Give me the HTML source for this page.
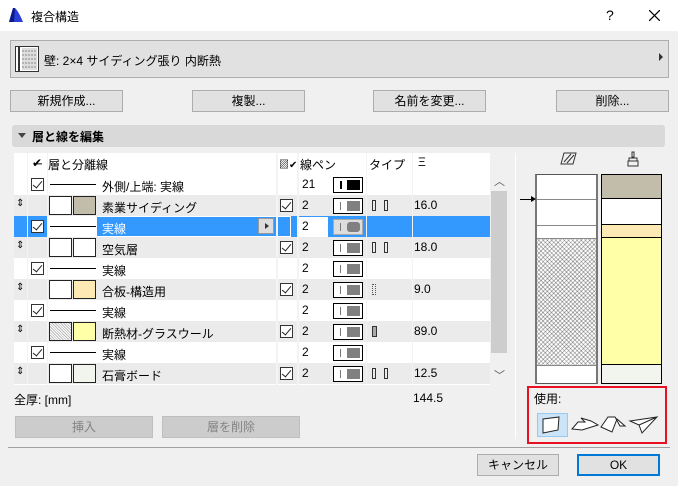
<!DOCTYPE html>
<html><head><meta charset="utf-8"><style>
*{margin:0;padding:0;box-sizing:border-box}
body{width:678px;height:486px;background:#f0f0f0;font-family:"Liberation Sans","Noto Sans CJK JP",sans-serif;font-size:12px;color:#000;position:relative;overflow:hidden}
.a{position:absolute}
.btn{position:absolute;background:#e1e1e1;border:1px solid #adadad;text-align:center;line-height:20px;font-size:12px}
.row{position:absolute;left:14px;width:476px;height:21px}
.g{background:#ebebeb}
.cb{position:absolute;width:13px;height:13px;border:1px solid #333;background:#fff}
.cb:after{content:"";position:absolute;left:3px;top:0px;width:4px;height:8px;border:solid #222;border-width:0 1.5px 1.5px 0;transform:rotate(40deg)}
.sw{position:absolute;top:1px;width:23px;height:19px;border:1px solid #222;background:#fff}
.ln{position:absolute;top:10px;left:36px;width:46px;height:1px;background:#000}
.tx{position:absolute;left:88px;top:4px}
.pen{position:absolute;left:288px;top:3px}
.lb{position:absolute;left:319px;top:3px;width:30px;height:16px;border:1px solid #000;background:#fff}
.lb i{position:absolute;left:6px;top:3px;width:1px;height:8px;background:#777}
.lb b{position:absolute;left:13px;top:2px;width:13px;height:10px;background:#808080}
.th{position:absolute;left:400px;top:3px}
.grip{position:absolute;left:2px;top:3px;font-size:10px}
.ty{position:absolute;left:358px;top:5px;width:4px;height:11px;border:1px solid #333}
.ty2{position:absolute;left:370px;top:5px;width:4px;height:11px;border:1px solid #333}
</style></head><body>
<div class="a" style="left:0;top:0;width:678px;height:31px;background:#fff"></div>
<svg class="a" style="left:8px;top:7px" width="16" height="16"><rect width="16" height="16" fill="#fff"/><path d="M1 15 L5 1 L7 1 C10 4 13 10 15 15 Z" fill="#2a3fd6"/><path d="M5 1 L7 1 L6 15 L1 15Z" fill="#0a1a8a"/></svg>
<div class="a" style="left:31px;top:8px;font-size:12px">複合構造</div>
<div class="a" style="left:606px;top:7px;font-size:14px">?</div>
<svg class="a" style="left:649px;top:10px" width="11" height="11"><path d="M0 0L11 11M11 0L0 11" stroke="#000" stroke-width="1.2"/></svg>
<div class="a" style="left:10px;top:40px;width:659px;height:38px;background:#e1e1e1;border:1px solid #adadad"></div>
<svg class="a" style="left:15px;top:46px" width="24" height="26"><rect x="0.5" y="0.5" width="23" height="25" fill="#fff" stroke="#333"/><rect x="3" y="1" width="2" height="24" fill="#333"/><rect x="7" y="2" width="15" height="22" fill="#ddd"/><path d="M7 5h15M7 9h15M7 13h15M7 17h15M7 21h15" stroke="#888" stroke-dasharray="2 1"/></svg>
<div class="a" style="left:44px;top:52px;font-size:12px">壁: 2×4 サイディング張り 内断熱</div>
<div class="a" style="left:659px;top:53px;width:0;height:0;border-left:4px solid #333;border-top:4px solid transparent;border-bottom:4px solid transparent"></div>
<div class="btn" style="left:10px;top:90px;width:113px;height:22px">新規作成...</div>
<div class="btn" style="left:192px;top:90px;width:113px;height:22px">複製...</div>
<div class="btn" style="left:373px;top:90px;width:113px;height:22px">名前を変更...</div>
<div class="btn" style="left:556px;top:90px;width:113px;height:22px">削除...</div>
<div class="a" style="left:12px;top:125px;width:653px;height:22px;background:#d9d9d9;border-radius:3px"></div>
<div class="a" style="left:18px;top:133px;width:0;height:0;border-top:5px solid #444;border-left:4px solid transparent;border-right:4px solid transparent"></div>
<div class="a" style="left:32px;top:128px;font-weight:bold">層と線を編集</div>
<div class="a" style="left:14px;top:153px;width:476px;height:232px;background:#fff"></div>
<div class="a" style="left:490px;top:153px;width:18px;height:232px;background:#f0f0f0"></div>
<div class="a" style="left:491px;top:191px;width:16px;height:162px;background:#cdcdcd"></div>
<div class="a" style="left:494px;top:173px;font-size:11px;color:#555">︿</div>
<div class="a" style="left:494px;top:367px;font-size:11px;color:#555">﹀</div>
<div class="a" style="left:32px;top:156px;font-size:12px">✔̶</div>
<div class="a" style="left:48px;top:156px">層と分離線</div>
<div class="a" style="left:279px;top:156px;font-size:10px">▨✔</div>
<div class="a" style="left:300px;top:156px">線ペン</div>
<div class="a" style="left:369px;top:156px">タイプ</div>
<div class="a" style="left:418px;top:155px">Ξ</div>

<div class="row" style="top:174px"><div class="cb" style="left:17px;top:4px"></div><div class="ln"></div><div class="tx">外側/上端: 実線</div><div class="pen">21</div><div class="lb"><i style="left:6px;width:2px;background:#000"></i><b style="background:#000"></b></div></div>
<div class="row g" style="top:195px"><div class="grip">⇕</div><div class="sw" style="left:35px"></div><div class="sw" style="left:59px;background:#c2bcaa"></div><div class="tx">素業サイディング</div><div class="cb" style="left:266px;top:4px"></div><div class="pen">2</div><div class="lb"><i></i><b></b></div><div class="ty"></div><div class="ty2"></div><div class="th">16.0</div></div>
<div class="row" style="top:216px;background:#3399ff"><div class="cb" style="left:17px;top:4px"></div><div class="a" style="left:34px;top:0;width:243px;height:21px;border:1px solid #fff"></div><div class="a" style="left:35px;top:1px;width:48px;height:19px;background:#fff"></div><div class="ln"></div><div class="tx" style="color:#fff">実線</div><div class="a" style="left:244px;top:2px;width:16px;height:16px;background:#ddd;border:1px solid #999"></div><div class="a" style="left:251px;top:7px;border-left:4px solid #333;border-top:3px solid transparent;border-bottom:3px solid transparent"></div><div class="a" style="left:284px;top:1px;width:30px;height:20px;background:#fff"></div><div class="pen">2</div><div class="lb" style="background:#ddd;border-color:#aaa"><i></i><b style="border-radius:3px"></b></div></div>
<div class="row g" style="top:237px"><div class="grip">⇕</div><div class="sw" style="left:35px"></div><div class="sw" style="left:59px"></div><div class="tx">空気層</div><div class="cb" style="left:266px;top:4px"></div><div class="pen">2</div><div class="lb"><i></i><b></b></div><div class="ty"></div><div class="ty2"></div><div class="th">18.0</div></div>
<div class="row" style="top:258px"><div class="cb" style="left:17px;top:4px"></div><div class="ln"></div><div class="tx">実線</div><div class="pen">2</div><div class="lb"><i></i><b></b></div></div>
<div class="row g" style="top:279px"><div class="grip">⇕</div><div class="sw" style="left:35px"></div><div class="sw" style="left:59px;background:#fde9b3"></div><div class="tx">合板-構造用</div><div class="cb" style="left:266px;top:4px"></div><div class="pen">2</div><div class="lb"><i></i><b></b></div><div class="ty" style="border:1px dotted #555"></div><div class="th">9.0</div></div>
<div class="row" style="top:300px"><div class="cb" style="left:17px;top:4px"></div><div class="ln"></div><div class="tx">実線</div><div class="pen">2</div><div class="lb"><i></i><b></b></div></div>
<div class="row g" style="top:321px"><div class="grip">⇕</div><div class="sw" style="left:35px;background:repeating-linear-gradient(45deg,#fff 0 1px,#bbb 1px 2px)"></div><div class="sw" style="left:59px;background:#ffffa8"></div><div class="tx">断熱材-グラスウール</div><div class="cb" style="left:266px;top:4px"></div><div class="pen">2</div><div class="lb"><i></i><b></b></div><div class="ty" style="width:5px;background:#aaa"></div><div class="th">89.0</div></div>
<div class="row" style="top:342px"><div class="cb" style="left:17px;top:4px"></div><div class="ln"></div><div class="tx">実線</div><div class="pen">2</div><div class="lb"><i></i><b></b></div></div>
<div class="row g" style="top:363px"><div class="grip">⇕</div><div class="sw" style="left:35px"></div><div class="sw" style="left:59px;background:#f2f4ee"></div><div class="tx">石膏ボード</div><div class="cb" style="left:266px;top:4px"></div><div class="pen">2</div><div class="lb"><i></i><b></b></div><div class="ty"></div><div class="ty2"></div><div class="th">12.5</div></div>
<div class="a" style="left:27px;top:153px;width:1px;height:232px;background:#f3f3f3"></div>
<div class="a" style="left:47px;top:153px;width:1px;height:232px;background:#f3f3f3"></div>
<div class="a" style="left:276px;top:153px;width:2px;height:232px;background:#f3f3f3"></div>
<div class="a" style="left:297px;top:153px;width:2px;height:232px;background:#f3f3f3"></div>
<div class="a" style="left:366px;top:153px;width:1px;height:232px;background:#f3f3f3"></div>
<div class="a" style="left:412px;top:153px;width:1px;height:232px;background:#f3f3f3"></div>

<div class="a" style="left:14px;top:391px">全厚: [mm]</div>
<div class="a" style="left:413px;top:391px">144.5</div>
<div class="btn" style="left:15px;top:416px;width:138px;height:22px;background:#ccc;border-color:#bfbfbf;color:#838383">挿入</div>
<div class="btn" style="left:162px;top:416px;width:138px;height:22px;background:#ccc;border-color:#bfbfbf;color:#838383">層を削除</div>

<div class="a" style="left:515px;top:153px;width:150px;height:286px;background:#f0f0f0;border-left:1px solid #fff"></div>
<svg class="a" style="left:560px;top:152px" width="18" height="14"><path d="M4 1H16L13 12H1Z" fill="none" stroke="#333"/><path d="M4 10L11 2M7 11L14 3" stroke="#333"/></svg>
<svg class="a" style="left:626px;top:151px" width="14" height="16"><path d="M6 1h2v5h-2z" fill="none" stroke="#333"/><path d="M3 7h8v3H3zM2 10h10v5H2z" fill="none" stroke="#333"/></svg>
<div class="a" style="left:535px;top:174px;width:63px;height:210px;background:#fff;border:1px solid #555;border-left:2px solid #777;border-right:2px solid #777"></div>
<div class="a" style="left:537px;top:238px;width:59px;height:127px;background:repeating-linear-gradient(45deg,#fff 0 2px,#bbb 2px 3px),repeating-linear-gradient(-45deg,#fff 0 2px,#bbb 2px 3px);background-blend-mode:multiply"></div>
<div class="a" style="left:537px;top:199px;width:59px;height:1px;background:#888"></div>
<div class="a" style="left:537px;top:225px;width:59px;height:1px;background:#888"></div>
<div class="a" style="left:537px;top:238px;width:59px;height:1px;background:#888"></div>
<div class="a" style="left:537px;top:365px;width:59px;height:1px;background:#888"></div>
<div class="a" style="left:601px;top:174px;width:61px;height:210px;border:1px solid #000;background:#f2f4ee"></div>
<div class="a" style="left:602px;top:175px;width:59px;height:24px;background:#c2bcaa;border-bottom:1px solid #000"></div>
<div class="a" style="left:602px;top:199px;width:59px;height:26px;background:#fff;border-bottom:1px solid #000"></div>
<div class="a" style="left:602px;top:225px;width:59px;height:13px;background:#fde9b3;border-bottom:1px solid #000"></div>
<div class="a" style="left:602px;top:238px;width:59px;height:127px;background:#ffffa8;border-bottom:1px solid #000"></div>
<div class="a" style="left:520px;top:199px;width:14px;height:1px;background:#000"></div>
<div class="a" style="left:531px;top:196px;border-left:5px solid #000;border-top:3px solid transparent;border-bottom:3px solid transparent"></div>
<div class="a" style="left:527px;top:386px;width:140px;height:58px;border:2px solid #e81123"></div>
<div class="a" style="left:534px;top:390px">使用:</div>
<div class="a" style="left:537px;top:413px;width:31px;height:24px;background:#cce4f7;border:1px solid #99c9ef"></div>
<svg class="a" style="left:537px;top:413px" width="130" height="24"><path d="M6 6L22 4L21 17L6 20Z" fill="#fff" stroke="#222"/><path d="M35 16L41 9L48 9L44 5L54 8L61 12L45 17Z" fill="#fff" stroke="#222"/><path d="M64 14L71 4L78 4L83 13L88 13L80 6L75 19Z" fill="#fff" stroke="#222"/><path d="M93 8L120 4L105 20L102 12Z M102 12L120 4" fill="#fff" stroke="#222"/></svg>

<div class="a" style="left:8px;top:447px;width:662px;height:1px;background:#a0a0a0"></div>
<div class="btn" style="left:477px;top:454px;width:82px;height:22px">キャンセル</div>
<div class="btn" style="left:577px;top:454px;width:83px;height:22px;border:2px solid #0078d7;line-height:18px">OK</div>
</body></html>
